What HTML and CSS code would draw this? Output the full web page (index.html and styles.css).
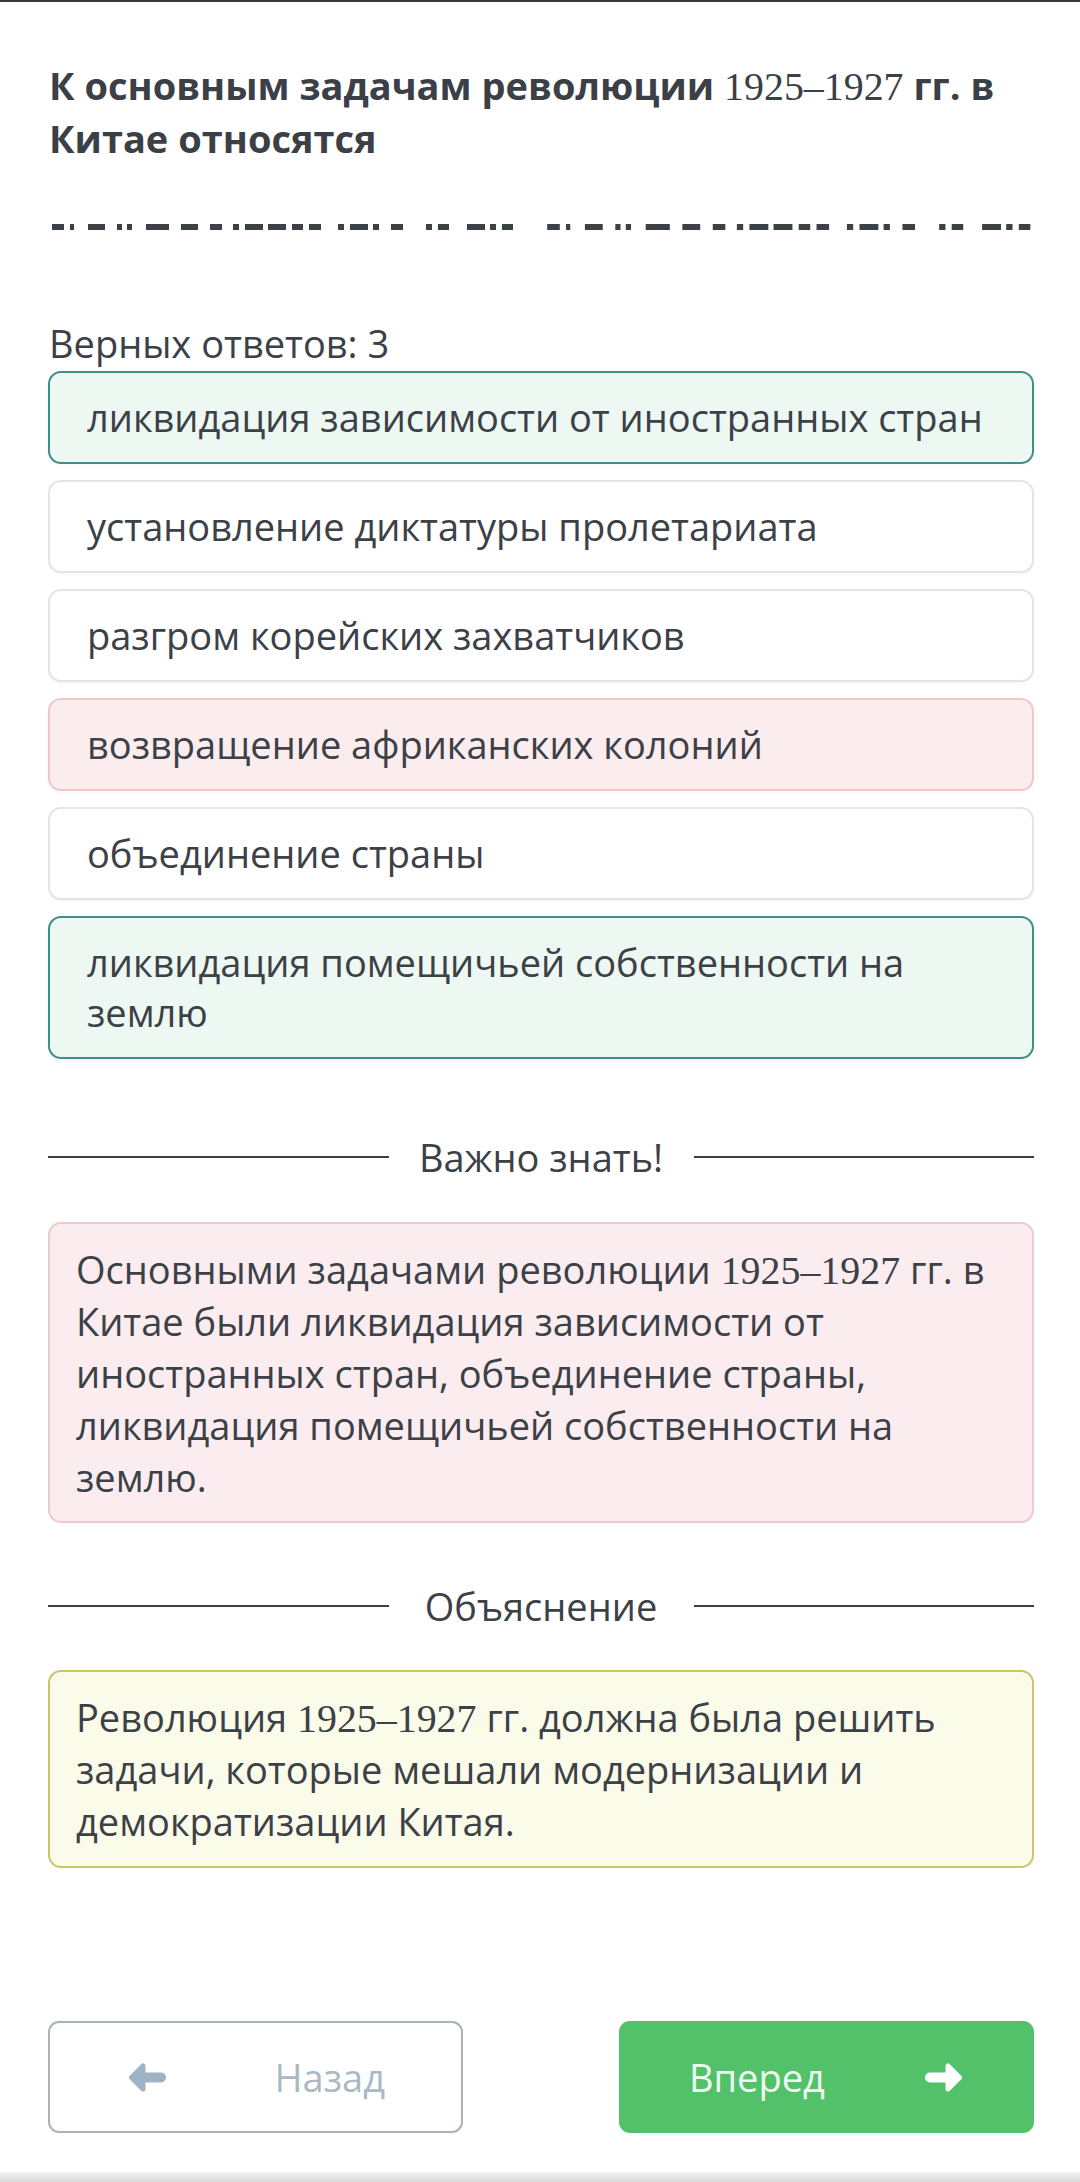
FILE: index.html
```html
<!DOCTYPE html>
<html lang="ru">
<head>
<meta charset="utf-8">
<title>Задание</title>
<link rel="stylesheet" href="styles.css">
</head>
<body>
<div class="topline"></div>
<main class="page">
  <h1 class="title">К основным задачам революции <span class="num">1925–1927</span> гг. в Китае относятся</h1>
  <svg class="blanks" width="986" height="6" viewBox="0 0 986 6">
    <defs>
      <g id="blankgroup">
        <rect x="4" y="0" width="12" height="6"/>
        <rect x="22" y="0" width="4" height="6"/>
        <rect x="40" y="0" width="17" height="6"/>
        <rect x="69" y="0" width="5" height="6"/>
        <rect x="79" y="0" width="5" height="6"/>
        <rect x="98" y="0" width="23" height="6"/>
        <rect x="133" y="0" width="17" height="6"/>
        <rect x="162" y="0" width="12" height="6"/>
        <rect x="185" y="0" width="6" height="6"/>
        <rect x="197" y="0" width="18" height="6"/>
        <rect x="220" y="0" width="18" height="6"/>
        <rect x="244" y="0" width="11" height="6"/>
        <rect x="261" y="0" width="12" height="6"/>
        <rect x="290" y="0" width="6" height="6"/>
        <rect x="302" y="0" width="18" height="6"/>
        <rect x="325" y="0" width="6" height="6"/>
        <rect x="343" y="0" width="12" height="6"/>
        <rect x="378" y="0" width="6" height="6"/>
        <rect x="390" y="0" width="11" height="6"/>
        <rect x="419" y="0" width="18" height="6"/>
        <rect x="442" y="0" width="6" height="6"/>
        <rect x="454" y="0" width="11" height="6"/>
      </g>
    </defs>
    <use href="#blankgroup"/>
    <use href="#blankgroup" transform="translate(495 0) scale(1.048 1)"/>
  </svg>
  <p class="count">Верных ответов: 3</p>
  <ul class="options">
    <li class="opt opt-correct">ликвидация зависимости от иностранных стран</li>
    <li class="opt">установление диктатуры пролетариата</li>
    <li class="opt">разгром корейских захватчиков</li>
    <li class="opt opt-wrong">возвращение африканских колоний</li>
    <li class="opt">объединение страны</li>
    <li class="opt opt-correct">ликвидация помещичьей собственности на землю</li>
  </ul>
  <div class="divider"><span class="rule"></span><span class="divider-label">Важно знать!</span><span class="rule"></span></div>
  <div class="note note-pink">Основными задачами революции <span class="num">1925–1927</span> гг. в Китае были ликвидация зависимости от иностранных стран, объединение страны, ликвидация помещичьей собственности на землю.</div>
  <div class="divider divider-second"><span class="rule"></span><span class="divider-label">Объяснение</span><span class="rule"></span></div>
  <div class="note note-yellow">Революция <span class="num">1925–1927</span> гг. должна была решить задачи, которые мешали модернизации и демократизации Китая.</div>
  <div class="nav">
    <button class="btn btn-back" type="button">
      <svg class="arrow" width="38" height="31" viewBox="0 0 38 31"><path d="M3.5 15.5 L15 4 L15 27 Z" stroke-width="5" stroke-linejoin="round"/><line x1="15" y1="15.5" x2="33" y2="15.5" stroke-width="10" stroke-linecap="round"/></svg>
      <span>Назад</span>
    </button>
    <button class="btn btn-next" type="button">
      <span>Вперед</span>
      <svg class="arrow" width="38" height="31" viewBox="0 0 38 31"><path d="M34.5 15.5 L23 4 L23 27 Z" stroke-width="5" stroke-linejoin="round"/><line x1="5" y1="15.5" x2="23" y2="15.5" stroke-width="10" stroke-linecap="round"/></svg>
    </button>
  </div>
</main>
<div class="bottombar"></div>
</body>
</html>
```

FILE: styles.css
```css
* { box-sizing: border-box; }
html, body { margin: 0; padding: 0; background: #ffffff; }
body {
  width: 1080px;
  font-family: "Open Sans", "Noto Sans", sans-serif;
  color: #3c4047;
}
.topline { height: 2px; background: #3a3a3a; }
.page { padding: 0 46px 0 48px; }
.num {
  font-family: "Liberation Serif", "DejaVu Serif", serif;
  font-weight: 400;
  font-size: 1.05em;
  line-height: 1;
}
.title {
  margin: 57px 0 0 1px;
  font-size: 38px;
  line-height: 53px;
  font-weight: 700;
  color: #3b3f46;
}
.blanks { display: block; margin-top: 59px; fill: #3c4047; }
.count {
  margin: 88px 0 0 1px;
  font-size: 38px;
  line-height: 50px;
}
.options { list-style: none; margin: 3px 0 0; padding: 0; display: flex; flex-direction: column; gap: 16px; }
.opt {
  border: 2px solid #e4e4e4;
  border-radius: 13px;
  background: #fff;
  padding: 19px 27px 20px 37px;
  font-size: 38px;
  line-height: 50px;
  box-shadow: 0 2px 3px rgba(0,0,0,0.03);
}
.opt-correct { background: #edf8f3; border-color: #3d8f87; }
.opt-wrong { background: #fbecee; border-color: #efc7cb; }
.divider {
  display: grid;
  grid-template-columns: 1fr 305px 1fr;
  align-items: center;
  margin-top: 73px;
}
.divider-second { margin-top: 58px; }
.rule { height: 2px; background: #3c4047; }
.divider-label { text-align: center; font-size: 38px; line-height: 50px; }
.note {
  margin-top: 40px;
  border: 2px solid;
  border-radius: 13px;
  padding: 19px 25px 18px 26px;
  font-size: 38px;
  line-height: 52px;
}
.note-pink { background: #fbedef; border-color: #efc9cc; }
.note-yellow { margin-top: 39px; padding-bottom: 19px; background: #fbfbe9; border-color: #c9c56d; }
.nav { display: flex; justify-content: space-between; margin-top: 153px; }
.btn {
  width: 415px;
  height: 112px;
  border-radius: 11px;
  display: flex;
  align-items: center;
  justify-content: space-between;
  padding: 0 72px;
  font-family: "Open Sans", "Noto Sans", sans-serif;
  font-size: 38px;
}
.btn-back { background: #fff; border: 2px solid #a6b4bc; color: #a9b9c6; padding: 0 76px 0 78px; }
.btn-back .arrow { fill: #9eb3c4; stroke: #9eb3c4; }
.btn-next { background: #52c16a; border: none; color: #eefbf0; padding: 0 71px 0 70px; }
.btn-next .arrow { fill: #ffffff; stroke: #ffffff; }
.bottombar { margin-top: 39px; height: 10px; background: linear-gradient(#f4f4f4, #d9d9d9); }
```
